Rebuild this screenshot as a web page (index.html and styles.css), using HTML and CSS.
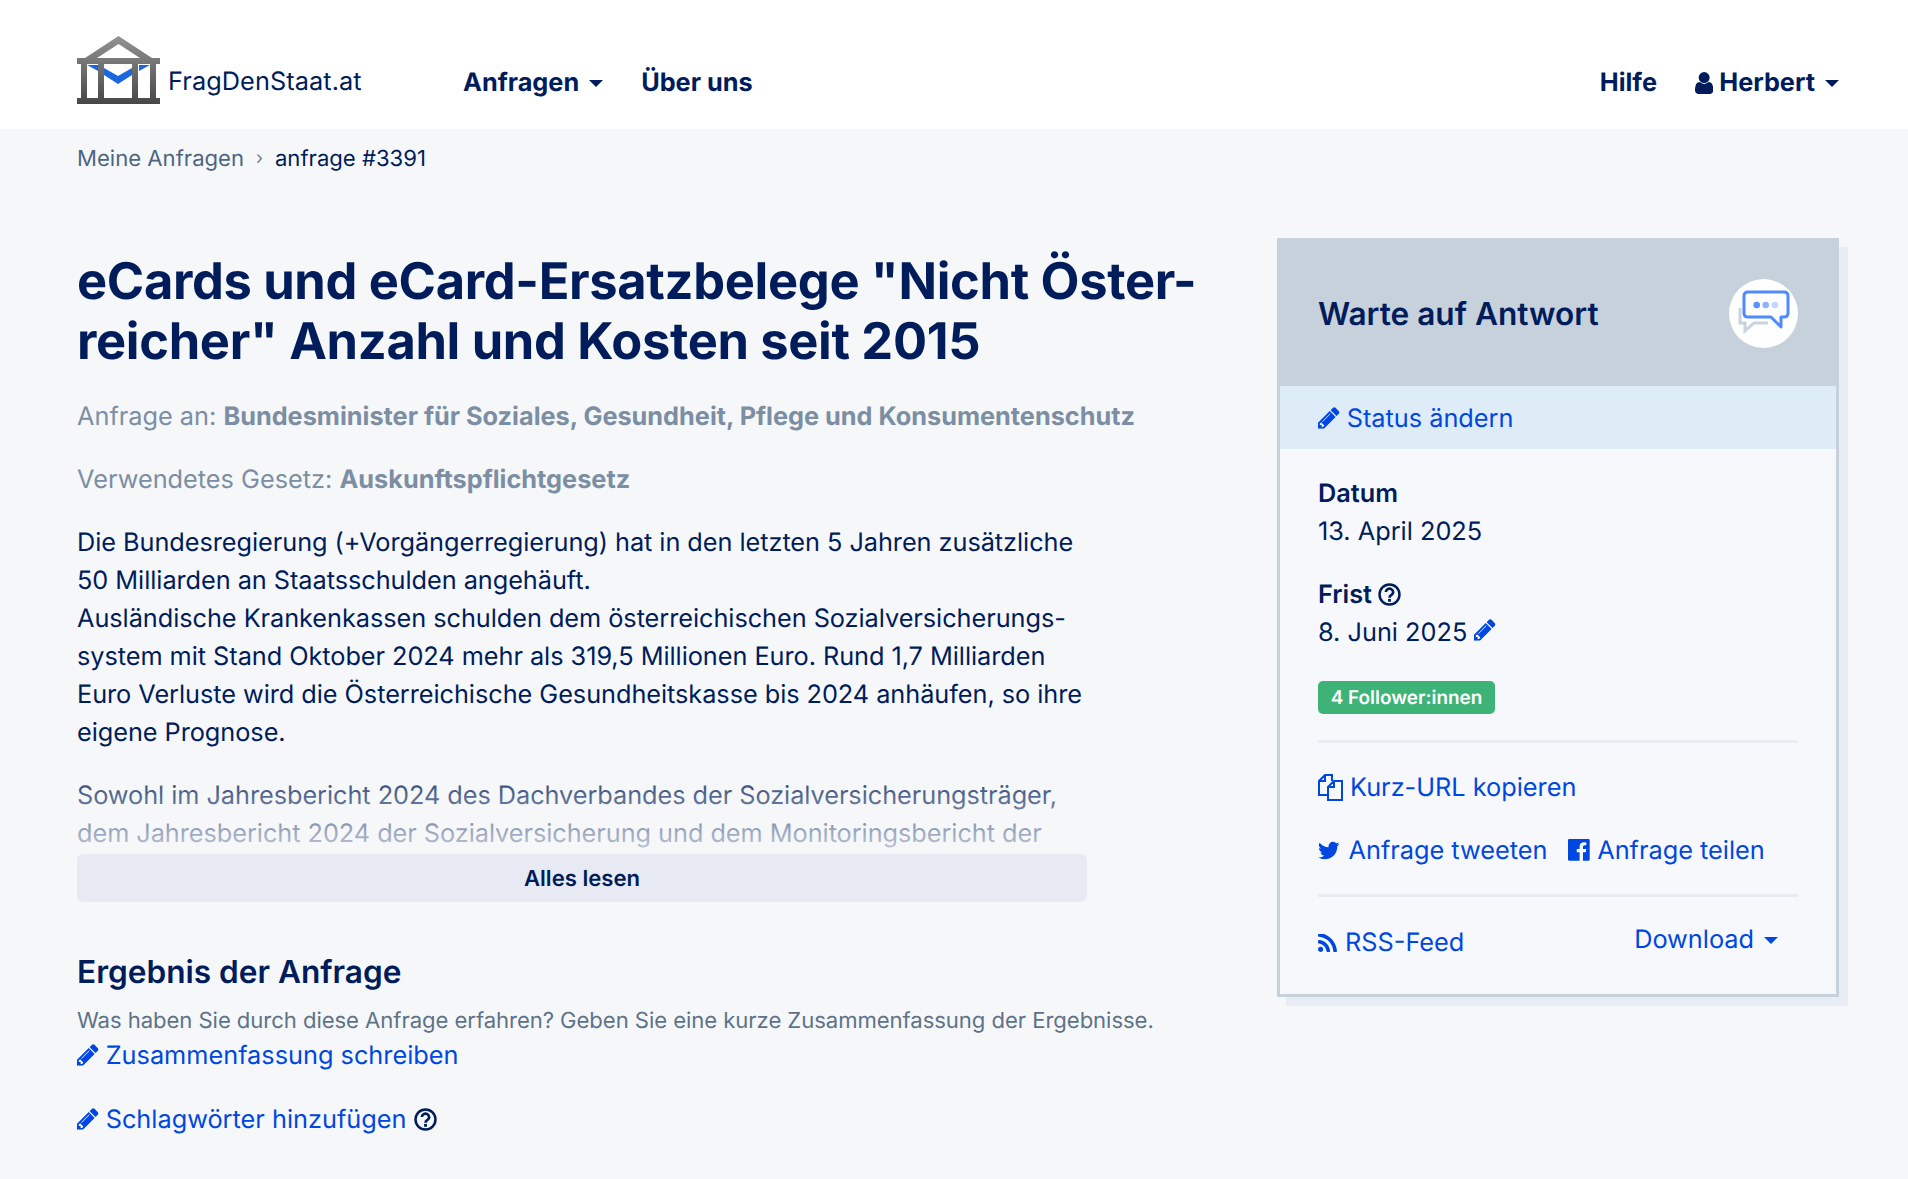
FILE: index.html
```html
<!DOCTYPE html>
<html lang="de">
<head>
    <meta charset="UTF-8">
    <meta name="viewport" content="width=device-width, initial-scale=1.0">
    <title>eCards und eCard-Ersatzbelege - FragDenStaat.at</title>
    <link rel="stylesheet" href="styles.css">
</head>
<body>
    <svg class="icon-defs" width="0" height="0">
        <symbol id="i-pencil" viewBox="128 128 1536 1536"><path d="M491 1536l91-91-235-235-91 91v107h128v128h107zm523-928q0-22-22-22-10 0-17 7l-542 542q-7 7-7 17 0 22 22 22 10 0 17-7l542-542q7-7 7-17zm-54-192l416 416-832 832h-416v-416zm683 96q0 53-37 90l-166 166-416-416 166-165q36-38 90-38 53 0 91 38l235 234q37 39 37 91z"/></symbol>
        <symbol id="i-help" viewBox="0 0 24 24"><circle cx="12" cy="12" r="10.4" fill="none" stroke="currentColor" stroke-width="2.6"/><path d="M8.200 9.400a3.800 3.600 0 1 1 5.900 3.100c-1.400.9-2.100 1.500-2.100 2.900" fill="none" stroke="currentColor" stroke-width="2.800"/><rect x="10.500" y="16.600" width="3" height="3"/></symbol>
    </svg>

    <header class="topbar">
        <a class="brand" href="#">
            <svg class="brand-logo" viewBox="0 0 83 70">
                <defs>
                    <linearGradient id="logoGrey" x1="0" y1="0" x2="0" y2="1">
                        <stop offset="0" stop-color="#939393"/>
                        <stop offset="1" stop-color="#474747"/>
                    </linearGradient>
                </defs>
                <path fill="url(#logoGrey)" fill-rule="evenodd" d="M41.500 1 75 23h8v6H79v34h4v6H0v-6h4V29H0v-6h8zM41.500 9 20 23h43zM10 29v34h11V29zM27 29v34h28V29zM61 29v34h12V29z"/>
                <path fill="#1c66e0" d="M10 30h11v6zM62 30h11l-11 6zM27 33l14 8 14-8v7l-14 9-14-9z"/>
            </svg>
            <span class="brand-name">FragDenStaat.at</span>
        </a>
        <nav class="nav nav-main">
            <a href="#" class="caret">Anfragen</a>
            <a href="#">Über uns</a>
        </nav>
        <nav class="nav nav-user">
            <a href="#">Hilfe</a>
            <a href="#" class="caret user-link"><svg class="icon" viewBox="256 128 1280 1536"><path d="M1536 1399q0 109-62.500 187t-150.500 78h-854q-88 0-150.500-78t-62.500-187q0-85 8.500-160.500t31.500-152 58.500-131 94-89 134.500-34.500q131 128 313 128t313-128q76 0 134.500 34.500t94 89 58.500 131 31.500 152 8.500 160.500zm-256-887q0 159-112.500 271.500t-271.500 112.500-271.500-112.500-112.500-271.500 112.500-271.500 271.500-112.500 271.500 112.500 112.500 271.500z"/></svg>Herbert</a>
        </nav>
    </header>

    <div class="breadcrumbs">
        <a href="#">Meine Anfragen</a>
        <span class="crumb-sep">›</span>
        <span class="crumb-current">anfrage #3391</span>
    </div>

    <main class="page">
        <section class="content">
            <h1>eCards und eCard-Ersatzbelege "Nicht Öster-<br>reicher" Anzahl und Kosten seit 2015</h1>

            <p class="meta">Anfrage an: <b>Bundesminister für Soziales, Gesundheit, Pflege und Konsumentenschutz</b></p>
            <p class="meta">Verwendetes Gesetz: <b>Auskunftspflichtgesetz</b></p>

            <div class="description">
                <p>Die Bundesregierung (+Vorgängerregierung) hat in den letzten 5 Jahren zusätzliche<br>
                50 Milliarden an Staatsschulden angehäuft.<br>
                Ausländische Krankenkassen schulden dem österreichischen Sozialversicherungs-<br>
                system mit Stand Oktober 2024 mehr als 319,5 Millionen Euro. Rund 1,7 Milliarden<br>
                Euro Verluste wird die Österreichische Gesundheitskasse bis 2024 anhäufen, so ihre<br>
                eigene Prognose.</p>
                <p>Sowohl im Jahresbericht 2024 des Dachverbandes der Sozialversicherungsträger,<br>
                dem Jahresbericht 2024 der Sozialversicherung und dem Monitoringsbericht der</p>
            </div>
            <button class="read-more" type="button">Alles lesen</button>

            <h2>Ergebnis der Anfrage</h2>
            <p class="result-hint">Was haben Sie durch diese Anfrage erfahren? Geben Sie eine kurze Zusammenfassung der Ergebnisse.</p>
            <a class="action" href="#"><svg class="icon"><use href="#i-pencil"/></svg>Zusammenfassung schreiben</a>
            <div class="tags-row">
                <a class="action" href="#"><svg class="icon"><use href="#i-pencil"/></svg>Schlagwörter hinzufügen</a>
                <svg class="icon help"><use href="#i-help"/></svg>
            </div>
        </section>

        <aside class="status-card">
            <div class="status-head">
                <span class="status-title">Warte auf Antwort</span>
                <span class="status-badge">
                    <svg viewBox="0 0 69 69" width="69" height="69">
                        <path fill="none" stroke="#c9d3dc" stroke-width="3" d="M11 29v15h5v8l9-8h14"/>
                        <path fill="#fff" stroke="#4f8bff" stroke-width="3" stroke-linejoin="round" d="M19 13h36q4 0 4 4v17q0 4-4 4h-3v10L42 38H19q-4 0-4-4V17q0-4 4-4z"/>
                        <circle cx="27.700" cy="26" r="3.300" fill="#5a92ff"/>
                        <circle cx="36.700" cy="26" r="3.300" fill="#8db2ff"/>
                        <circle cx="46" cy="26" r="3.300" fill="#c3d6ff"/>
                    </svg>
                </span>
            </div>
            <div class="status-edit">
                <a class="action" href="#"><svg class="icon"><use href="#i-pencil"/></svg>Status ändern</a>
            </div>
            <div class="status-body">
                <dl class="facts">
                    <dt>Datum</dt>
                    <dd>13. April 2025</dd>
                    <dt>Frist <svg class="icon help"><use href="#i-help"/></svg></dt>
                    <dd>8. Juni 2025 <a class="icon-link" href="#"><svg class="icon"><use href="#i-pencil"/></svg></a></dd>
                </dl>
                <span class="badge">4 Follower:innen</span>
                <hr>
                <a class="action" href="#"><svg class="icon copy" viewBox="0 0 25 27"><path fill="none" stroke="currentColor" stroke-width="2" d="M14 7V1H7L1 7v14h8M7 1v6H1M16 7h8v19H10V13zM16 7v6h-6"/></svg>Kurz-URL kopieren</a>
                <div class="share-row">
                    <a class="action" href="#"><svg class="icon twitter" viewBox="108 192 1576 1408"><path d="M1684 408q-67 98-162 167 1 14 1 42 0 130-38 259.500t-115.500 248.500-184.500 210.500-258 146-323 54.500q-271 0-496-145 35 4 78 4 225 0 401-138-105-2-188-64.500t-114-159.500q33 5 61 5 43 0 85-11-112-23-185.500-111.500t-73.500-205.500v-4q68 38 146 41-66-44-105-115t-39-154q0-88 44-163 121 149 294.500 238.500t371.500 99.500q-8-38-8-74 0-134 94.500-228.500t228.500-94.500q140 0 236 102 109-21 205-78-37 115-142 178 93-10 186-50z"/></svg>Anfrage tweeten</a>
                    <a class="action" href="#"><svg class="icon" viewBox="128 128 1536 1536"><path d="M1579 128q35 0 60 25t25 60v1366q0 35-25 60t-60 25h-391v-595h199l30-232h-229v-148q0-56 23.500-84t91.500-28l122-1v-207q-63-9-178-9-136 0-217.500 80t-81.500 226v171h-200v232h200v595h-735q-35 0-60-25t-25-60v-1366q0-35 25-60t60-25h1366z"/></svg>Anfrage teilen</a>
                </div>
                <hr class="hr-feed">
                <div class="feed-row">
                    <a class="action" href="#"><svg class="icon rss" viewBox="192 192 1408 1344"><path d="M576 1344q0 80-56 136t-136 56-136-56-56-136 56-136 136-56 136 56 56 136zm512 123q2 28-17 48-18 21-47 21h-135q-25 0-43-16.500t-20-41.500q-22-229-184.500-391.500t-391.500-184.500q-25-2-41.500-20t-16.500-43v-135q0-29 21-47 17-17 43-17h5q160 13 306 80.500t259 181.500q114 113 181.500 259t80.500 306zm512 2q2 27-18 47-18 20-46 20h-143q-26 0-44.500-17.500t-19.500-42.500q-12-215-101-408.500t-231.500-336-336-231.500-408.500-102q-25-1-42.500-19.500t-17.500-43.500v-143q0-28 20-46 18-18 44-18h3q262 13 501.500 120t425.500 294q187 186 294 425.500t120 501.500z"/></svg>RSS-Feed</a>
                    <a class="action caret download" href="#">Download</a>
                </div>
            </div>
        </aside>
    </main>
</body>
</html>
```

FILE: styles.css
```css
* {
    box-sizing: border-box;
}

html,
body {
    height: 100%;
}

body {
    margin: 0;
    overflow: hidden;
    font-family: Inter, "Liberation Sans", sans-serif;
    font-size: 25.3px;
    line-height: 38px;
    color: #001c5a;
    background-color: #f6f7f9;
    text-rendering: geometricPrecision;
}

a {
    color: inherit;
    text-decoration: none;
}

.icon-defs {
    display: none;
}

.icon {
    width: 21.7px;
    height: 21.7px;
    fill: currentColor;
}

/* Kopfzeile */
.topbar {
    display: flex;
    align-items: center;
    height: 129px;
    padding: 10px 69px 0 77px;
    background-color: #fff;
}

.brand {
    display: flex;
    align-items: flex-end;
    width: 386px;
}

.brand-logo {
    width: 83px;
    height: 70px;
    margin-right: 8px;
}

.brand-name {
    line-height: 38px;
    margin-bottom: 4px;
    letter-spacing: 0.08px;
}

.nav {
    display: flex;
    gap: 38px;
    font-weight: 700;
}

.nav-main {
    margin-top: 26px;
}

.nav-user {
    margin-left: auto;
    margin-top: 26px;
}

.user-link .icon {
    width: 18.300px;
    height: 22px;
    margin-right: 6px;
    vertical-align: -3px;
}

.caret::after {
    content: "";
    display: inline-block;
    margin-left: 10px;
    vertical-align: 4px;
    border-top: 7.500px solid currentColor;
    border-left: 7.500px solid transparent;
    border-right: 7.500px solid transparent;
}

/* Broodkruimel */
.breadcrumbs {
    display: flex;
    align-items: center;
    padding: 11px 77px 9px;
    font-size: 22.1px;
    color: #4c6580;
}

.crumb-sep {
    margin: 0 12px;
    font-size: 18px;
    color: #6c7f93;
}

.crumb-current {
    color: #001c5a;
}

/* Hoofdkolommen */
.page {
    display: flex;
    justify-content: space-between;
    padding: 51px 69px 0 77px;
}

.content {
    width: 1160px;
    padding-top: 14px;
}

h1 {
    margin: 0 0 26px;
    font-size: 50.6px;
    line-height: 60px;
    font-weight: 700;
    letter-spacing: -0.33px;
}

.meta {
    margin: 0 0 25px;
    color: #7b8ea3;
}

.meta b {
    font-weight: 700;
    color: #7b8ea3;
}

.description {
    height: 329px;
    width: 1010px;
    overflow: hidden;
    position: relative;
    letter-spacing: -0.05px;
}

.description p {
    margin: 0 0 25px;
}

.description::after {
    content: "";
    position: absolute;
    left: 0;
    right: 0;
    bottom: 0;
    height: 100px;
    background: linear-gradient(to bottom, rgba(246, 247, 249, 0), rgba(246, 247, 249, 0.8));
}

.read-more {
    display: block;
    width: 1010px;
    height: 48px;
    margin-top: 1px;
    padding-top: 2px;
    border: none;
    border-radius: 6px;
    background-color: #e7eaf2;
    color: #001c5a;
    font-family: inherit;
    font-size: 22.1px;
    font-weight: 600;
    text-rendering: geometricPrecision;
}

h2 {
    margin: 48px 0 0;
    font-size: 31.6px;
    line-height: 44px;
    font-weight: 600;
}

.result-hint {
    margin: 11px 0 0;
    font-size: 22.1px;
    line-height: 32px;
    color: #5d7288;
    letter-spacing: -0.06px;
}

.action {
    color: #0047e1;
}

.action .icon {
    margin-right: 7px;
    vertical-align: -2px;
}

.tags-row {
    margin-top: 26px;
    color: #001c5a;
}

.icon.help {
    width: 23px;
    height: 23px;
    vertical-align: -3px;
}

/* Statuskaart */
.status-card {
    flex: none;
    width: 562px;
    height: 759px;
    border: 3px solid #c7d1db;
    border-top: none;
    box-shadow: 9px 9px 0 #e8ecf4;
    background-color: #f7f8fb;
}

.status-head {
    display: flex;
    align-items: center;
    justify-content: space-between;
    height: 148px;
    margin: 0 -3px;
    padding: 0 41px;
    background-color: #c7d1db;
}

.status-title {
    padding-top: 4px;
    font-size: 31.6px;
    font-weight: 600;
}

.status-badge {
    display: flex;
    width: 69px;
    height: 69px;
    margin-top: 2px;
    border-radius: 50%;
    background-color: #fff;
}

.status-edit {
    height: 63px;
    padding: 14px 38px;
    background-color: #deecf8;
}

.status-body {
    padding: 26px 38px 0;
}

.facts {
    margin: 0;
}

.facts dt {
    font-weight: 600;
}

.facts dd {
    margin: 0 0 25px;
}

.icon-link {
    color: #0047e1;
}

.badge {
    display: block;
    width: 177px;
    height: 33px;
    margin-top: 29px;
    border-radius: 5px;
    background-color: #3eb377;
    color: #fff;
    font-size: 18.900px;
    line-height: 33px;
    font-weight: 600;
    text-align: center;
}

hr {
    height: 3px;
    margin: 26px 0;
    border: none;
    background-color: #e8ebf1;
}

.hr-feed {
    margin: 24px 0 27px;
}

.action .copy {
    width: 25px;
    height: 27px;
    margin-right: 7px;
    vertical-align: -5px;
}

.action .twitter {
    width: 21.500px;
    height: 19.200px;
    margin-right: 9px;
    vertical-align: -1px;
}

.action .rss {
    width: 19px;
    height: 18px;
    margin-right: 8px;
    vertical-align: -1px;
}

.share-row {
    display: flex;
    gap: 21px;
    margin-top: 25px;
}

.feed-row {
    display: flex;
    justify-content: space-between;
    padding-right: 20px;
}

.download {
    margin-top: -3px;
}
```
